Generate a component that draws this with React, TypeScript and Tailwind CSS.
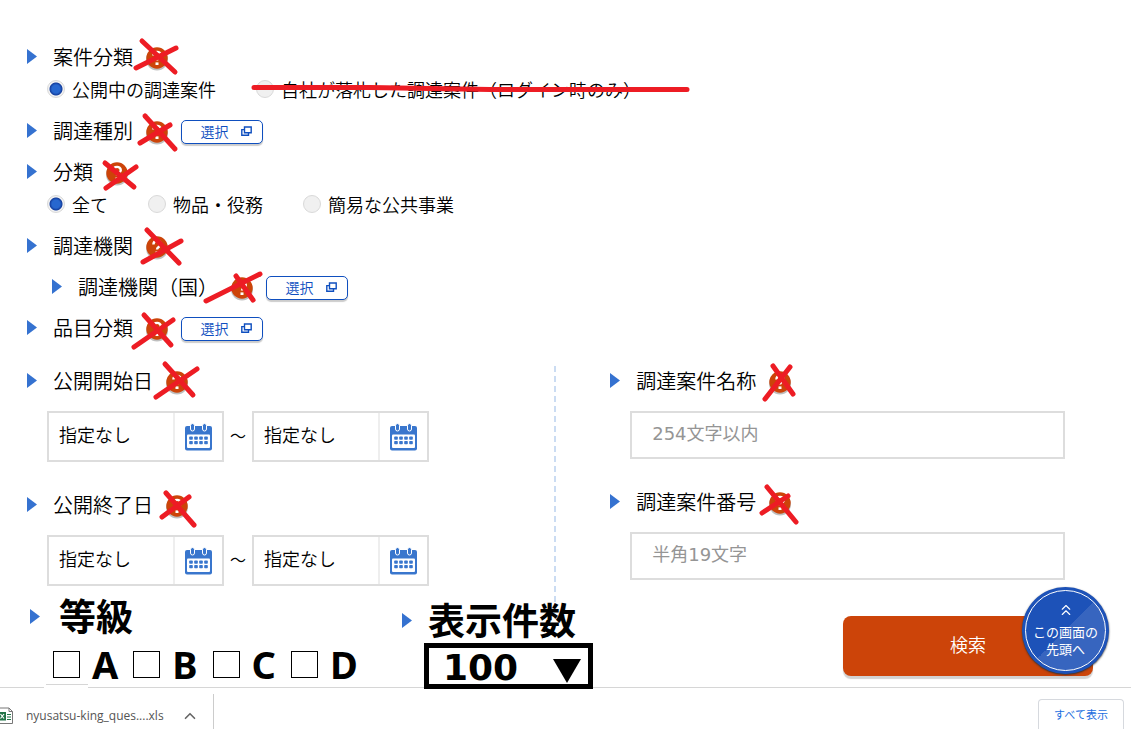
import React from 'react';
import { ChevronUp, ChevronsUp } from 'lucide-react';

type Point = [number, number, number, number];

function Marker() {
  return (
    <svg className="w-[10px] h-[15px] shrink-0" viewBox="0 0 10 15" aria-hidden="true">
      <path d="M0 0L10 7.5L0 15Z" fill="#3572d0" />
    </svg>
  );
}

// Help badge crossed out by two pen strokes, given relative to its centre
function HelpBadge({ strokes }: { strokes: Point[] }) {
  return (
    <button type="button" aria-label="ヘルプ" className="relative z-10 w-[22px] h-6 shrink-0">
      <svg className="overflow-visible w-[22px] h-6" viewBox="-11 -13 22 24">
        <circle cx="0" cy="1.5" r="11" fill="#000" opacity="0.25" />
        <circle cx="0" cy="0" r="10.7" fill="#cc4409" />
        <path d="M-3.6 -2.6C-3.6 -7.2 3.8 -7.2 3.8 -2.8C3.8 -0.2 0 -0.2 0 2.6" fill="none" stroke="#fff" strokeWidth="2.4" />
        <rect x="-1.5" y="4.4" width="3" height="2.6" fill="#fff" />
        {strokes.map(([x1, y1, x2, y2], i) => (
          <line key={i} x1={x1} y1={y1} x2={x2} y2={y2} stroke="#ed1c24" strokeWidth="5" strokeLinecap="round" />
        ))}
      </svg>
    </button>
  );
}

function Heading({ text, strokes, children, className = '' }: {
  text: string;
  strokes: Point[];
  children?: React.ReactNode;
  className?: string;
}) {
  return (
    <div className={`flex items-center h-[41px] ${className}`}>
      <Marker />
      <h2 className="ml-4 text-xl whitespace-nowrap">{text}</h2>
      <div className="flex items-center gap-[13px] ml-[13px]">
        <HelpBadge strokes={strokes} />
        {children}
      </div>
    </div>
  );
}

function SelectButton() {
  return (
    <button type="button" className="flex items-center justify-center gap-3 w-[82px] h-6 mt-0.5 pl-2 pb-0.5 rounded-[5px] border border-[#0f4fbf] bg-white text-sm text-[#0f4fbf] shadow-[0_2px_1px_#ccc]">
      選択
      <svg className="w-[11px] h-[10px]" viewBox="0 0 11 10" fill="none" stroke="#0f4fbf" aria-hidden="true">
        <path d="M3.5 1H10.2V6.8H3.5Z" strokeWidth="1.4" />
        <path d="M3.5 3.6H0.8V9.3H7.5V6.8" strokeWidth="1.4" />
      </svg>
    </button>
  );
}

function RadioOption({ name, label, checked = false }: { name: string; label: string; checked?: boolean }) {
  return (
    <label className="flex items-center gap-[7px] text-lg leading-6 whitespace-nowrap">
      <input
        type="radio"
        name={name}
        defaultChecked={checked}
        className="appearance-none size-[18px] shrink-0 rounded-full border border-[#d9d9d9] bg-[#f0f0f0] checked:bg-[radial-gradient(circle,#2767cf_0_4px,#153f9e_6px,#f3f3f3_7px)]"
      />
      {label}
    </label>
  );
}

function CalendarIcon() {
  return (
    <svg className="w-[27px] h-7" viewBox="0 0 27 28" aria-hidden="true">
      <rect x="0" y="3" width="27" height="24.5" rx="2" fill="#3976cd" />
      <rect x="2" y="11.5" width="23" height="13.5" rx="1" fill="#fff" />
      {[7.5, 19.5].map((x) => (
        <rect key={x} x={x - 2} y="0.5" width="4" height="7.5" rx="2" fill="#3976cd" stroke="#fff" strokeWidth="1" />
      ))}
      {[13.5, 18].map((y) =>
        [4.2, 9.2, 14.2, 19.2].map((x) => (
          <rect key={`${x}-${y}`} x={x} y={y} width="3.6" height="3.3" rx="0.8" fill="#3976cd" />
        ))
      )}
    </svg>
  );
}

function DateField({ label }: { label: string }) {
  return (
    <div className="flex w-[177px] h-[51px] border-2 border-[#ddd] bg-white">
      <input type="text" aria-label={label} defaultValue="指定なし" className="flex-1 min-w-0 pl-[10px] pb-[5px] text-lg outline-none" />
      <button type="button" aria-label="カレンダー" className="flex items-center justify-center w-[49px] border-l-2 border-[#eee]">
        <CalendarIcon />
      </button>
    </div>
  );
}

function DateRange({ text, strokes }: { text: string; strokes: Point[] }) {
  return (
    <div>
      <Heading text={text} strokes={strokes} />
      <div className="flex items-center mt-[10px] ml-5">
        <DateField label={`${text} から`} />
        <span className="w-7 pb-1 text-center text-base">～</span>
        <DateField label={`${text} まで`} />
      </div>
    </div>
  );
}

function TextField({ text, placeholder, strokes }: {
  text: string;
  placeholder: string;
  strokes: Point[];
}) {
  return (
    <div>
      <Heading text={text} strokes={strokes} />
      <div className="mt-[10px] ml-5">
        <input
          type="text"
          aria-label={text}
          placeholder={placeholder}
          className="block w-full h-12 px-5 pb-1 border-2 border-[#ddd] font-['DejaVu_Sans','Noto_Sans_CJK_JP',sans-serif] text-lg font-normal placeholder:text-[#959595] outline-none"
        />
      </div>
    </div>
  );
}

function DownloadBar() {
  return (
    <footer className="relative flex items-end -mt-0.5 h-[42px] border-t border-[#d6d6d6] font-['Open_Sans','Noto_Sans_CJK_JP',sans-serif] text-xs font-normal text-[#555]">
      <div className="flex items-center w-[214px] h-[35px] pt-2 border-r border-[#ccc]">
        <svg className="w-[14px] h-[18px] shrink-0" viewBox="0 0 14 18" aria-hidden="true">
          <path d="M0 1H9L12.5 4.5V16.5H0" fill="#fff" stroke="#777" />
          <path d="M9 1V4.5H12.5" fill="none" stroke="#777" />
          <path d="M7 7.5H11M7 10H11M7 12.5H11" stroke="#217346" strokeWidth="1.2" />
          <rect x="0" y="5" width="6" height="8.5" fill="#217346" />
          <path d="M0.5 7L4 11.5M4 7L0.5 11.5" stroke="#fff" strokeWidth="1.2" />
        </svg>
        <a href="#file" className="ml-3 whitespace-nowrap">nyusatsu-king_ques....xls</a>
        <button type="button" aria-label="メニュー" className="ml-auto mr-[14px]">
          <ChevronUp className="size-[18px] text-[#666]" strokeWidth={2.2} />
        </button>
      </div>
      <button type="button" className="ml-auto mr-[7px] w-[86px] h-[30px] pt-0.5 rounded-t border border-b-0 border-[#d6d9de] text-[11px] text-[#1a6ee0]">
        すべて表示
      </button>
    </footer>
  );
}

export default function App() {
  return (
    <div className="relative min-h-screen overflow-hidden bg-white font-['Noto_Sans_CJK_JP',sans-serif] font-[350] text-black">
      <form className="pt-9" onSubmit={(e) => e.preventDefault()}>
        <section className="pl-[27px]">
          <Heading text="案件分類" strokes={[[-15, -17, 18, 14], [-21, 10, 19, -10]]} />
          <div className="flex gap-10 pl-5 mb-[10px] h-[23px] items-center">
            <RadioOption name="case" label="公開中の調達案件" checked />
            <div className="relative">
              <RadioOption name="case" label="自社が落札した調達案件（ログイン時のみ）" />
              <svg className="absolute -left-[6px] top-[6px] w-[442px] h-3" viewBox="0 0 442 12" aria-hidden="true">
                <path d="M4 4.5L120 4.5L240 6.5L437 6.5" fill="none" stroke="#ed1c24" strokeWidth="5" strokeLinecap="round" />
              </svg>
            </div>
          </div>
          <Heading text="調達種別" strokes={[[-12, -16, 18, 17], [-17, 11, 13, -7]]}>
            <SelectButton />
          </Heading>
          <Heading text="分類" strokes={[[-12, -10, 17, 14], [-11, 15, 19, -6]]} />
          <div className="flex gap-10 pl-5 mb-[10px] h-[23px] items-center">
            <RadioOption name="kind" label="全て" checked />
            <RadioOption name="kind" label="物品・役務" />
            <RadioOption name="kind" label="簡易な公共事業" />
          </div>
          <Heading text="調達機関" strokes={[[-10, -17, 22, 16], [-14, 15, 24, -6]]} />
          <Heading text="調達機関（国）" strokes={[[-36, 13, 18, -14], [-6, -12, 11, 12]]} className="ml-[25px]">
            <SelectButton />
          </Heading>
          <Heading text="品目分類" strokes={[[-13, -14, 14, 16], [-23, 18, 16, -9]]}>
            <SelectButton />
          </Heading>
        </section>

        <section className="flex mt-3">
          <div className="flex flex-col gap-[22px] w-[49%] pl-[27px]">
            <DateRange text="公開開始日" strokes={[[-12, -18, 16, 13], [-21, 15, 20, -13]]} />
            <DateRange text="公開終了日" strokes={[[-11, -13, 17, 19], [-15, 11, 12, -9]]} />
          </div>
          <div className="w-0.5 mt-[6px] -mb-4 bg-[repeating-linear-gradient(to_bottom,#cbdcf2_0_6px,transparent_6px_10px)]" />
          <div className="flex flex-col gap-[22px] flex-1 pl-[54px] pr-[66px]">
            <TextField text="調達案件名称" placeholder="254文字以内" strokes={[[-7, -16, 13, 12], [-15, 17, 10, -15]]} />
            <TextField text="調達案件番号" placeholder="半角19文字" strokes={[[-13, -16, 16, 19], [-18, 10, 8, -7]]} />
          </div>
        </section>

        <section className="flex items-start pl-[30px] pt-2">
          <fieldset className="w-[372px]">
            <legend className="flex items-center gap-[19px] h-11 text-[37px] font-bold">
              <Marker />
              等級
            </legend>
            <div className="flex gap-[15px] mt-[6px] pl-[23px] h-10 items-center font-['Noto_Sans',sans-serif] text-[38px] font-bold leading-10">
              {['A', 'B', 'C', 'D'].map((grade) => (
                <label key={grade} className="flex items-center gap-3">
                  <input type="checkbox" name="grade" value={grade} className="appearance-none size-[27px] border border-black bg-white" />
                  {grade}
                </label>
              ))}
            </div>
          </fieldset>
          <div className="mt-1">
            <label htmlFor="count" className="flex items-center gap-4 h-11 text-[37px] font-bold whitespace-nowrap">
              <Marker />
              表示件数
            </label>
            <div className="relative z-10 mt-px ml-[22px] w-[169px]">
              <select id="count" className="block appearance-none w-full h-[46px] pl-[14px] pt-1 border-[5px] border-black bg-white font-['DejaVu_Sans',sans-serif] text-4xl leading-8 font-bold">
                <option>100</option>
              </select>
              <svg className="absolute right-3 top-4 w-7 h-6 pointer-events-none" viewBox="0 0 28 24" aria-hidden="true">
                <path d="M0 0H28L14 24Z" />
              </svg>
            </div>
          </div>
          <button type="submit" className="ml-auto mr-[38px] mt-[22px] w-[250px] h-[60px] pb-1 rounded-lg bg-[#cc4409] text-lg text-white shadow-[0_3px_1px_#d2d2d2]">
            検索
          </button>
        </section>
      </form>

      <DownloadBar />

      {/* end of the page border that runs below the first check box */}
      <div className="absolute left-[44px] bottom-[41px] w-[44px] h-1 bg-white">
        <div className="ml-0.5 h-px bg-[#d6d6d6]" />
      </div>

      <a href="#top" className="absolute z-20 right-[22px] bottom-[55px] size-[87px] rounded-full bg-[#1d52b8] p-[3px] text-white shadow-[0_1px_2px_#333]">
        <span className="flex flex-col items-center size-full rounded-full border border-white bg-[linear-gradient(135deg,#1d52b8_50%,#3765bf_50%)] pt-[10px] text-[13px] leading-[17px] font-normal text-center whitespace-nowrap">
          <ChevronsUp className="size-[18px] mb-1" strokeWidth={1.5} />
          この画面の
          <br />
          先頭へ
        </span>
      </a>
    </div>
  );
}
